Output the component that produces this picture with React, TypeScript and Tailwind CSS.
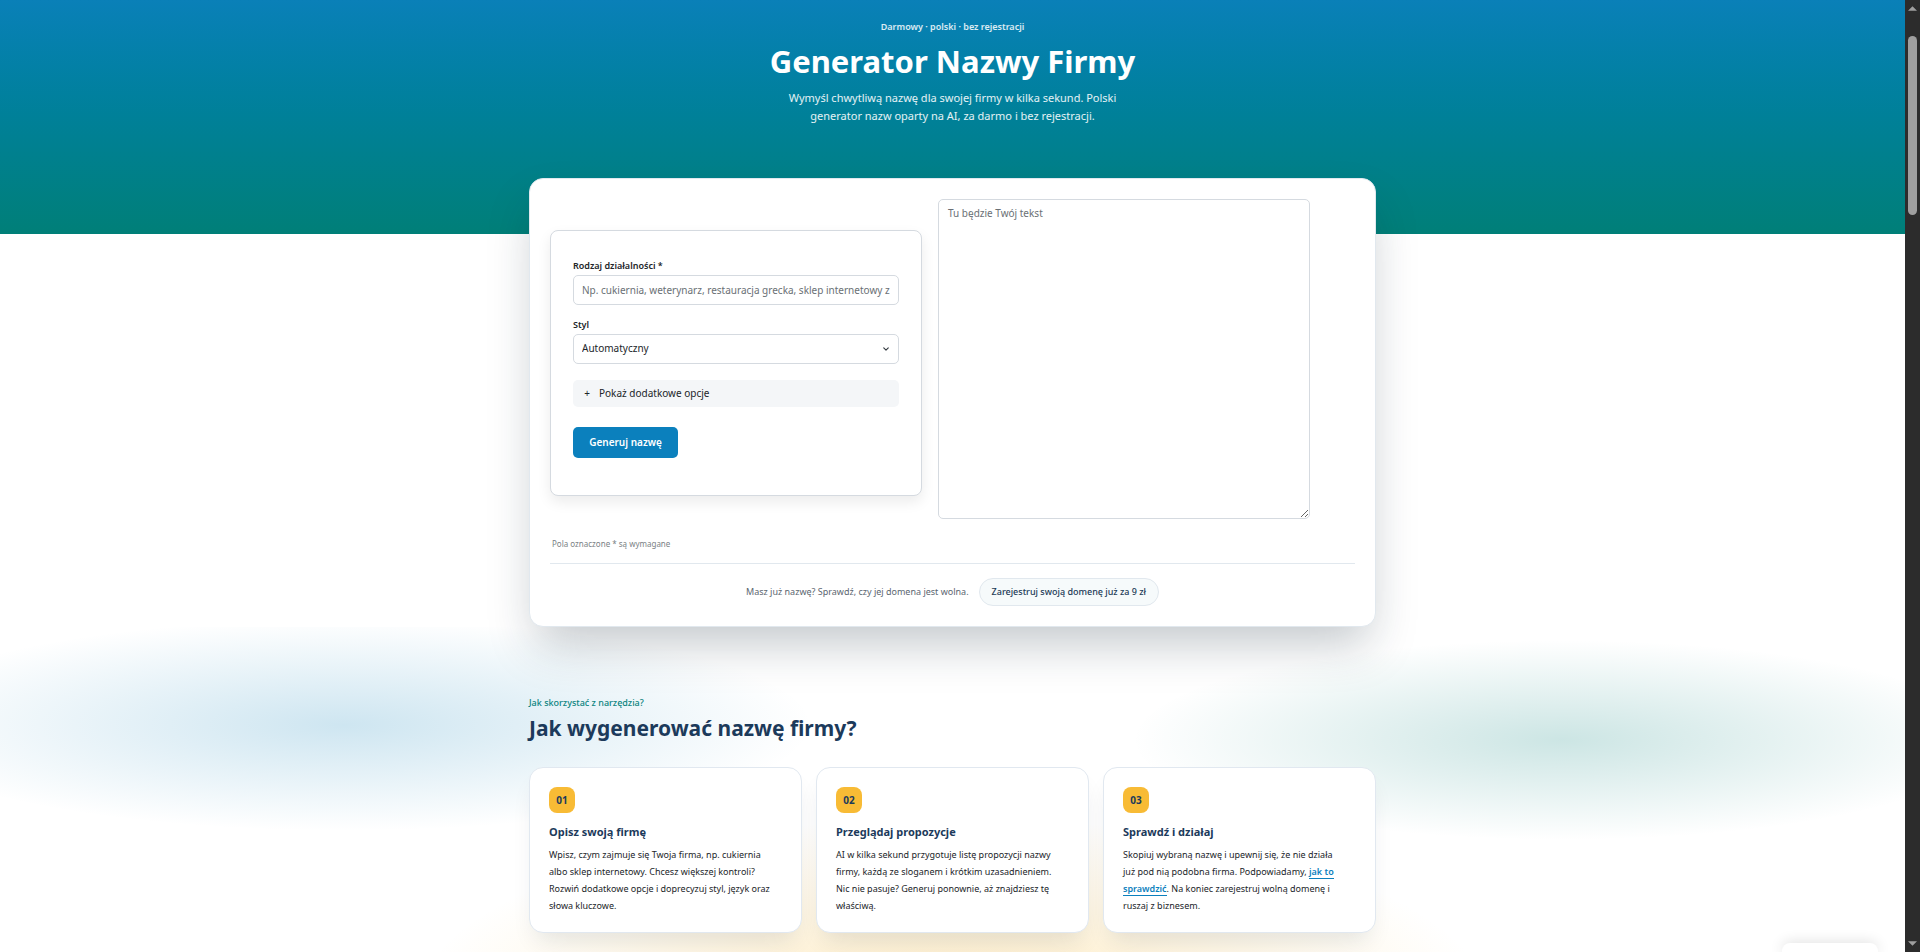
import * as React from "react"

const steps = [
  {
    number: "01",
    title: "Opisz swoją firmę",
    text: "Wpisz, czym zajmuje się Twoja firma, np. cukiernia albo sklep internetowy. Chcesz większej kontroli? Rozwiń dodatkowe opcje i doprecyzuj styl, język oraz słowa kluczowe.",
  },
  {
    number: "02",
    title: "Przeglądaj propozycje",
    text: "AI w kilka sekund przygotuje listę propozycji nazwy firmy, każdą ze sloganem i krótkim uzasadnieniem. Nic nie pasuje? Generuj ponownie, aż znajdziesz tę właściwą.",
  },
  {
    number: "03",
    title: "Sprawdź i działaj",
    text: (
      <>
        Skopiuj wybraną nazwę i upewnij się, że nie działa już&nbsp;pod nią podobna firma. Podpowiadamy,{" "}
        <a href="#sprawdz" className="border-b border-[#0b80bd] font-semibold text-[#0b80bd]">
          jak to sprawdzić
        </a>
        . Na koniec zarejestruj wolną domenę i ruszaj z biznesem.
      </>
    ),
  },
]

function Hero() {
  return (
    <header className="h-[234px] bg-linear-to-b from-[#0a80b8] to-[#007f78] pt-[18px] text-center text-white">
      <p className="text-[9px] leading-[18px] font-semibold text-white/85">Darmowy · polski · bez rejestracji</p>
      <h1 className="mt-1 text-[31px] leading-[42px] font-bold">Generator Nazwy Firmy</h1>
      <p className="mx-auto mt-[7px] max-w-[350px] text-[11px] leading-[18px] text-white/90">
        Wymyśl chwytliwą nazwę dla swojej firmy w kilka sekund. Polski generator nazw oparty na AI, za darmo i bez rejestracji.
      </p>
    </header>
  )
}

function GeneratorForm() {
  return (
    <form className="flex w-[372px] flex-col items-stretch rounded-lg border border-[#d5dae0] bg-white px-[22px] pt-7 pb-[37px] shadow-[0_6px_14px_rgba(0,0,0,0.08)]">
      <label htmlFor="business" className="text-[9px] leading-[14px] font-semibold">
        Rodzaj działalności *
      </label>
      <input
        id="business"
        type="text"
        placeholder="Np. cukiernia, weterynarz, restauracja grecka, sklep internetowy z"
        className="mt-0.5 h-[30px] rounded-[5px] border border-[#d5dae0] px-2 text-[10px] placeholder:text-[#6a7075]"
      />

      <label htmlFor="style" className="mt-[13px] text-[9px] leading-[14px] font-semibold">
        Styl
      </label>
      <div className="mt-0.5 grid items-center">
        <select
          id="style"
          className="col-start-1 row-start-1 h-[30px] appearance-none rounded-[5px] border border-[#d5dae0] bg-white px-2 text-[10px]"
        >
          <option>Automatyczny</option>
        </select>
        <svg
          viewBox="0 0 16 16"
          className="pointer-events-none col-start-1 row-start-1 mr-[10px] size-[6px] justify-self-end"
          fill="none"
          stroke="#343a40"
          strokeWidth="3"
          strokeLinecap="round"
          strokeLinejoin="round"
        >
          <path d="M2 5l6 6 6-6" />
        </svg>
      </div>

      <button type="button" className="mt-4 flex h-[27px] items-center gap-2 rounded-[5px] bg-[#f4f6f8] px-[10px] text-[10px]">
        <span className="w-2">+</span>
        Pokaż dodatkowe opcje
      </button>

      <button type="submit" className="mt-5 h-[31px] w-[105px] rounded-[5px] bg-[#0b80bd] text-[10px] font-semibold text-white">
        Generuj nazwę
      </button>
    </form>
  )
}

function Generator() {
  return (
    <section className="relative mx-auto -mt-14 w-[847px] rounded-[14px] border border-[#e1e8ee] bg-white p-5 shadow-[0_24px_48px_-8px_rgba(20,40,55,0.26)]">
      <div className="flex items-center gap-4">
        <GeneratorForm />
        <textarea
          aria-label="Wynik"
          placeholder="Tu będzie Twój tekst"
          className="mb-[7px] h-80 w-[372px] resize rounded-[5px] border border-[#d5dae0] px-[9px] py-[5px] text-[10px] leading-[16px] placeholder:text-[#6a7075]"
        />
      </div>

      <p className="mt-3 px-0.5 text-[8px] leading-[12px] text-[#7a7f84]">Pola oznaczone * są wymagane</p>

      <div className="mt-[13px] flex items-center justify-center gap-2.5 border-t border-[#e1e8ee] pt-[14px]">
        <span className="text-[9px] text-[#5b6670]">Masz już nazwę? Sprawdź, czy jej domena jest wolna.</span>
        <a
          href="#domena"
          className="flex h-7 items-center rounded-full border border-[#e1e8ee] bg-[#f6fafb] px-3 text-[9px] font-medium text-[#1c3a57]"
        >
          Zarejestruj swoją domenę już za 9 zł
        </a>
      </div>
    </section>
  )
}

function Steps() {
  return (
    <section className="grow bg-[radial-gradient(470px_106px_at_18%_98px,rgba(10,128,184,0.2),transparent),radial-gradient(430px_100px_at_82%_113px,rgba(0,127,120,0.2),transparent),radial-gradient(540px_190px_at_50%_380px,rgba(247,185,50,0.3),transparent)]">
      <div className="mx-auto w-[847px] pt-[67px]">
        <p className="text-[9px] leading-[18px] font-medium text-[#0b8480]">Jak skorzystać z narzędzia?</p>
        <h2 className="text-[21px] leading-[32px] font-bold text-[#1c3a5b]">Jak wygenerować nazwę firmy?</h2>

        <div className="mt-[23px] grid grid-cols-3 gap-[14px]">
          {steps.map((step) => (
            <article
              key={step.number}
              className="rounded-[14px] border border-[#e1e8f0] bg-white px-[19px] pt-[19px] pb-[18px] shadow-[0_14px_24px_-8px_rgba(20,40,55,0.12)]"
            >
              <span className="flex size-[26px] items-center justify-center rounded-lg bg-[#f8bb35] text-[10px] font-bold text-[#1c3a5b]">
                {step.number}
              </span>
              <h3 className="mt-[10px] text-[11px] leading-[18px] font-bold text-[#1c3a5b]">{step.title}</h3>
              <p className="mt-[5px] pr-2 text-[9px] leading-[17px]">{step.text}</p>
            </article>
          ))}
        </div>
      </div>
    </section>
  )
}

function Scrollbar() {
  return (
    <div className="flex w-[15px] shrink-0 flex-col items-center bg-[#2c2c2c] py-[6px]" aria-hidden="true">
      <svg viewBox="0 0 10 5" className="h-[5px] w-[9px]" fill="#9f9f9f">
        <path d="M5 0L10 5H0z" />
      </svg>
      <div className="mt-[25px] h-[179px] w-[9px] rounded-full bg-[#9f9f9f]" />
      <svg viewBox="0 0 10 5" className="mt-auto h-[5px] w-[9px]" fill="#9f9f9f">
        <path d="M0 0H10L5 5z" />
      </svg>
    </div>
  )
}

export default function App() {
  return (
    <div className="flex h-screen overflow-hidden bg-white font-['Noto_Sans',sans-serif] text-[#212529]">
      <main className="relative flex min-w-0 grow flex-col overflow-hidden">
        <Hero />
        <Generator />
        <Steps />
        {/* Floating widget peeking in from the bottom edge */}
        <div className="absolute right-[27px] bottom-0 h-[9px] w-24 rounded-t-lg bg-white shadow-[0_0_14px_rgba(0,0,0,0.16)]" />
      </main>
      <Scrollbar />
    </div>
  )
}
